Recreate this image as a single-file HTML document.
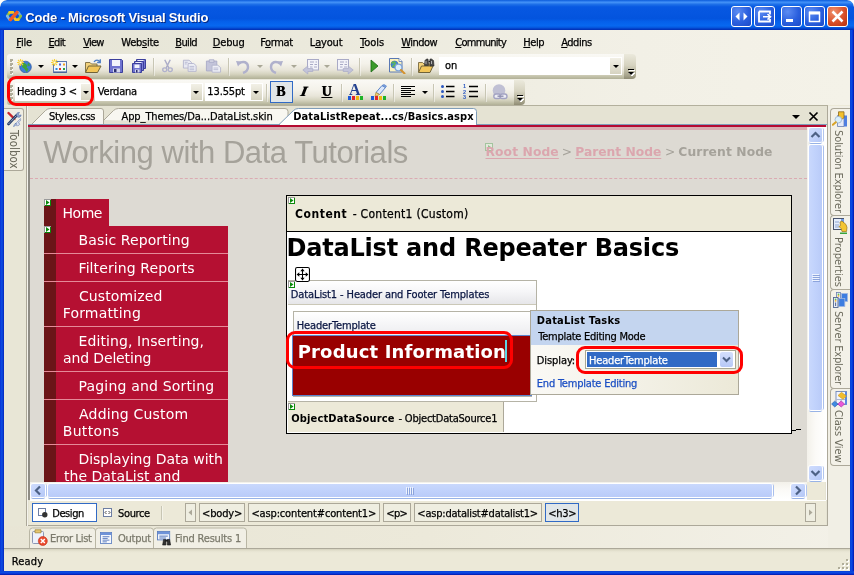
<!DOCTYPE html>
<html lang="en">
<head>
<meta charset="utf-8">
<title>Code - Microsoft Visual Studio</title>
<style>
*{box-sizing:border-box;margin:0;padding:0}
html,body{width:854px;height:575px;overflow:hidden;background:#fff}
body{font-family:"DejaVu Sans Condensed","Liberation Sans",sans-serif;font-size:11px;color:#000;line-height:1}
#win{will-change:transform;position:relative;width:854px;height:575px;overflow:hidden;background:#ece9d8;border-radius:7px 7px 0 0}
.a,#win div,#win span,#win svg{position:absolute;white-space:nowrap}
.ui{font-family:"DejaVu Sans Condensed","Liberation Sans",sans-serif;font-size:11px;line-height:13px;-webkit-text-stroke:.25px currentColor}
.vd{font-family:"DejaVu Sans","Liberation Sans",sans-serif}
#win u{position:static;text-decoration:underline;text-underline-offset:1px;text-decoration-thickness:1px}
#win b,#win i{position:static}
/* title bar */
#title{left:0;top:0;width:854px;height:30px;background:linear-gradient(180deg,#0a5ad8 0%,#2a7aee 4%,#4190f6 8%,#1c6ee8 15%,#0758e2 23%,#0354de 62%,#0560ea 72%,#0768f0 86%,#0556dd 92%,#0238c2 97%,#0130b0 100%);border-radius:7px 7px 0 0}
.t{font:bold 13px "Liberation Sans",sans-serif;color:#fff;text-shadow:1px 1px 0 #0a2a80;line-height:16px}
.cb{top:6px;width:21px;height:21px;border:1px solid #fff;border-radius:3px;background:radial-gradient(circle at 30% 25%,#5d8cf2 0%,#2a5fde 55%,#1c4ac8 100%)}
.cb.x{background:radial-gradient(circle at 30% 25%,#f0906c 0%,#d9502a 55%,#b8300c 100%)}
/* frame */
#bl{left:0;top:30px;width:4px;height:545px;background:linear-gradient(90deg,#0831d9,#0a4be0 40%,#0b3fd8 70%,#0024b8)}
#br{left:850px;top:30px;width:4px;height:545px;background:linear-gradient(90deg,#0a3fd8,#0a4be0 40%,#0831d9 70%,#001a9e)}
#bb{left:0;top:571px;width:854px;height:4px;background:linear-gradient(180deg,#0a3fd8,#0a4be0 40%,#0831d9 70%,#001a9e)}
/* menubar */
#menubar{left:4px;top:30px;width:846px;height:24px}

/* toolbars */
.tb{background:linear-gradient(180deg,#faf9f5 0%,#f4f2ea 38%,#e8e5d9 64%,#d6d4c0 80%,#c3c2aa 90%,#b1b097 100%);border-radius:3px 0 0 3px}
.tbend{background:linear-gradient(180deg,#ebe9dc 0%,#d6d3c0 45%,#a9a68e 85%,#8f8c74 100%);border-radius:0 4px 4px 0}
.grip{width:3px;background:linear-gradient(135deg,#b0ad99 0 60%,#fff 60%) 0 0/3px 4px repeat-y;}.grip::after{content:"";position:absolute;left:0;top:3px;width:3px;height:100%;background:repeating-linear-gradient(180deg,#f1efe6 0 1px,transparent 1px 4px)}
.sep{width:1px;background:#c8c6b4;box-shadow:1px 0 0 rgba(255,255,255,.45)}
.combo{background:#fff;height:18px}
.cbtn{width:13px;height:16px;background:linear-gradient(180deg,#f2f0e6,#d6d3c0)}
.arr{width:0;height:0;border:3px solid transparent;border-top:3px solid #000;border-bottom:0}
.red{border:3px solid #f00;border-radius:9px;z-index:5}
/* doc */
#doc{left:30px;top:130px;width:777px;height:352px;background:#dddad3;overflow:hidden}
#nav{left:14px;top:69px;width:184px;height:300px}
#nav .mi{left:0;width:184px;background:#b51032;border-left:12px solid #6b1518;color:#fff;font-size:14px;line-height:17px;white-space:nowrap;box-shadow:0 1px 0 #e58a98}
#nav .mi:first-child{box-shadow:none}
#nav .mi i{display:inline-block;width:16px}
#content{left:256px;top:65px;width:506px;height:239px;background:#fff;border:1px solid #000}
#dl{left:1px;top:84px;width:249px;height:122px;border:1px solid #b5b3a6;border-left:0;background:#fff}
#pop{left:243px;top:114px;width:209px;height:85px;border:1px solid #aca899;background:linear-gradient(90deg,#faf9f5,#ece9d8)}
.sbb{border-radius:2px;background:linear-gradient(135deg,#cfdcfd 0%,#c3d3fb 50%,#b3c7f6 100%);box-shadow:0 0 0 1px #fff,0 2px 0 0 #98b3e6,2px 0 0 0 #b2c5ee}
.sbt{border-radius:2px;box-shadow:0 0 0 1px #fff,0 2px 0 0 #98b3e6,2px 0 0 0 #a9bfec}
.crumb{top:503px;height:19px;border:1px solid #aca899;background:#efeee1}
.stab{left:830px;width:21px;border:1px solid #aca899;border-right:0;border-radius:4px 0 0 4px;background:#f3f1e8}
.sv{left:846px;transform-origin:0 0;transform:rotate(90deg);font-family:"DejaVu Sans Condensed","Liberation Sans",sans-serif;font-size:11px;line-height:15px;color:#6b6a5c;letter-spacing:0}
#crumbs{left:0;top:0}
.bc{font-family:"DejaVu Sans","Liberation Sans",sans-serif;font-size:12.300px;font-weight:bold;line-height:16px;color:#a5a29a}
.bc.l{color:#dba6ae;text-decoration:underline;text-underline-offset:2px}
.bc.s{font-weight:normal}
.nv{font-family:"DejaVu Sans","Liberation Sans",sans-serif;font-size:14px;line-height:17px;color:#fff}
</style>
</head>
<body>
<div id="win">
<!-- title -->
<div id="title">
 <svg style="left:5px;top:10px" width="18" height="12" viewBox="0 0 18 12"><path d="M2.200 6L4.600 2.400" stroke="#8cc03f" stroke-width="2.600" stroke-linecap="round"/><path d="M4.600 2.400H8" stroke="#f7c51f" stroke-width="2.600" stroke-linecap="round"/><path d="M2.200 6l2.400 3.600" stroke="#7fb4e8" stroke-width="2.600" stroke-linecap="round"/><path d="M15.800 6l-2.400-3.600" stroke="#69a8e0" stroke-width="2.600" stroke-linecap="round"/><path d="M15.800 6l-2.400 3.600" stroke="#8cc03f" stroke-width="2.600" stroke-linecap="round"/><path d="M13.400 9.600H10.500L8.500 6.500" fill="none" stroke="#f7c51f" stroke-width="2.600" stroke-linecap="round"/><path d="M5.500 9.600L12 2.400" stroke="#f05a28" stroke-width="3.400" stroke-linecap="round"/></svg>
 <span class="t" style="left:25.3px;top:10px;letter-spacing:-0.18px;">Code - Microsoft Visual Studio</span>
 <div class="cb" style="left:731px"><svg width="19" height="19" viewBox="0 0 19 19"><path d="M3.500 9.500l4-4v8zM15.500 9.500l-4-4v8z" fill="#fff"/></svg></div>
 <div class="cb" style="left:754px"><svg width="19" height="19" viewBox="0 0 19 19"><path d="M4 4.500h11v3M15 12v2.500H4V4.500" fill="none" stroke="#fff" stroke-width="1.800"/><path d="M8 9.800h6.500M12.500 7l3 2.800-3 2.800" fill="none" stroke="#fff" stroke-width="1.600"/></svg></div>
 <div class="cb" style="left:781px"><svg width="19" height="19" viewBox="0 0 19 19"><rect x="4" y="12" width="7" height="3" fill="#fff"/></svg></div>
 <div class="cb" style="left:804px"><svg width="19" height="19" viewBox="0 0 19 19"><path d="M4.500 5.500h10v9h-10z" fill="none" stroke="#fff" stroke-width="1.500"/><path d="M4 4.500h11v3H4z" fill="#fff"/></svg></div>
 <div class="cb x" style="left:827px"><svg width="19" height="19" viewBox="0 0 19 19"><path d="M4.500 4.500l10 10M14.500 4.500l-10 10" stroke="#fff" stroke-width="2.500" stroke-linecap="butt"/></svg></div>
</div>
<!-- menu -->
<div style="left:4px;top:30px;width:846px;height:76px;background:linear-gradient(90deg,#e5e4d5 0%,#ebe9dc 35%,#f2f0e6 75%,#f4f2e8 100%)"></div>
<div id="menubar"></div>

<span class="ui" style="left:16.3px;top:36px;letter-spacing:-0.23px;"><u>F</u>ile</span>
<span class="ui" style="left:48.5px;top:36px;letter-spacing:-0.7px;"><u>E</u>dit</span>
<span class="ui" style="left:83.2px;top:36px;letter-spacing:-0.77px;"><u>V</u>iew</span>
<span class="ui" style="left:121.3px;top:36px;letter-spacing:-0.25px;">Web<u>s</u>ite</span>
<span class="ui" style="left:175.3px;top:36px;letter-spacing:-0.65px;"><u>B</u>uild</span>
<span class="ui" style="left:212.8px;top:36px;letter-spacing:-0.15px;"><u>D</u>ebug</span>
<span class="ui" style="left:260.2px;top:36px;letter-spacing:-0.38px;">F<u>o</u>rmat</span>
<span class="ui" style="left:309.8px;top:36px;letter-spacing:-0.18px;">L<u>a</u>yout</span>
<span class="ui" style="left:360px;top:36px;letter-spacing:-0.02px;"><u>T</u>ools</span>
<span class="ui" style="left:401.3px;top:36px;letter-spacing:-0.54px;"><u>W</u>indow</span>
<span class="ui" style="left:455.2px;top:36px;letter-spacing:-0.7px;"><u>C</u>ommunity</span>
<span class="ui" style="left:523.3px;top:36px;letter-spacing:-0.43px;"><u>H</u>elp</span>
<span class="ui" style="left:561.2px;top:36px;letter-spacing:-0.48px;"><u>A</u>ddins</span>
<!-- toolbars -->
<div class="tb" style="left:7px;top:54px;width:618px;height:25px"></div>
<div class="tbend" style="left:624px;top:54px;width:12px;height:25px"><svg width="12" height="25"><path d="M5 16.500h6M5 19h6l-3 3z" stroke="#fff" fill="#fff" stroke-width="1"/><path d="M4 15.500h6" stroke="#000" stroke-width="1"/><path d="M4 18h6l-3 3z" fill="#000"/></svg></div>
<div class="grip" style="left:10px;top:59px;height:15px"></div>
<!-- new web site -->
<svg style="left:17px;top:59px" width="15" height="14" viewBox="0 0 15 14"><circle cx="8.500" cy="8" r="5.800" fill="#3d7fd6" stroke="#2a4f9a" stroke-width=".7"/><path d="M5 4.500c1.500-1 3 0 4 .5l1.500 2-1 1.500 2 1.500-1.500 3c-1.500-.5-1.500-2-2.500-3s-2.500-1.500-2.500-3z" fill="#3fa33c"/><path d="M11 3.500l2 2.500-1 1.500-1.500-1.500z" fill="#3fa33c"/><path d="M3.500 0v7M0 3.500h7M1 1l5 5M6 1l-5 5" stroke="#f6cf3a" stroke-width="1.100"/><rect x="2.500" y="2.500" width="2" height="2" fill="#fffbe0"/></svg>
<div class="arr" style="left:38px;top:65px"></div>
<!-- add item -->
<svg style="left:51px;top:59px" width="16" height="14" viewBox="0 0 16 14"><rect x="2.500" y="2.500" width="13" height="11" fill="#f4f7fd" stroke="#5d79b0"/><path d="M3 13h12.500" stroke="#36508a" stroke-width="1"/><rect x="8" y="4.500" width="2" height="2" fill="#4a63d8"/><rect x="12" y="4.500" width="2" height="2" fill="#f0a020"/><rect x="4.500" y="9" width="2" height="2" fill="#2a8ae0"/><rect x="8" y="9" width="2" height="2" fill="#e04020"/><rect x="12" y="9" width="2" height="2" fill="#2aa040"/><path d="M3.500 0v7M0 3.500h7M1 1l5 5M6 1l-5 5" stroke="#f6cf3a" stroke-width="1.100"/><rect x="2.500" y="2.500" width="2" height="2" fill="#fffbe0"/></svg>
<div class="arr" style="left:72px;top:65px"></div>
<!-- open -->
<svg style="left:85px;top:59px" width="17" height="14" viewBox="0 0 17 14"><path d="M.5 13V3.500h4.500l1.500 1.500h5.500V7" fill="#f3d27c" stroke="#85754a"/><path d="M.5 13.500L3.500 7h12.500l-3.500 6.500z" fill="#f2c65a" stroke="#6f6238"/><path d="M9 3c1.500-2.500 4.500-2.500 6 0M15.300 .3v3.200h-3.200" fill="none" stroke="#4f7fc6" stroke-width="1.300"/></svg>
<!-- save -->
<svg style="left:109px;top:59px" width="14" height="14" viewBox="0 0 14 14"><path d="M.5 .5h12l1 1v12H.5z" fill="#7074d0" stroke="#3b3f9c"/><rect x="3" y="1" width="8" height="6" fill="#f2f4fc"/><rect x="4" y="9.500" width="7" height="4" fill="#d5d8ee"/><rect x="5" y="10" width="2.500" height="3" fill="#2c2f6e"/></svg>
<!-- save all -->
<svg style="left:132px;top:59px" width="14" height="14" viewBox="0 0 14 14"><path d="M4.500 .5h9v9h-9z" fill="#7377d2" stroke="#3b3f9c"/><path d="M5.500 1.500h6" stroke="#eef0fb" stroke-width="1"/><path d="M2.500 2.500h9v9h-9z" fill="#7b7fd8" stroke="#3b3f9c"/><path d="M3.500 3.500h6" stroke="#eef0fb" stroke-width="1"/><path d="M.5 4.500h9v9h-9z" fill="#7074d0" stroke="#3b3f9c"/><rect x="2.500" y="5.500" width="5" height="3.500" fill="#f2f4fc"/><rect x="3" y="10.500" width="4.500" height="3" fill="#d5d8ee"/><rect x="4" y="11" width="1.500" height="2.500" fill="#2c2f6e"/></svg>
<div class="sep" style="left:153px;top:58px;height:18px"></div>
<!-- cut (disabled) -->
<svg style="left:162px;top:59px" width="11" height="14" preserveAspectRatio="none" viewBox="0 0 12 17"><path d="M3 1l4.500 10M9 1L4.500 11" stroke="#acadc8" stroke-width="1.600" fill="none"/><circle cx="3" cy="13" r="2.200" fill="none" stroke="#b0b1cc" stroke-width="1.500"/><circle cx="9" cy="13" r="2.200" fill="none" stroke="#b0b1cc" stroke-width="1.500"/></svg>
<!-- copy -->
<svg style="left:182px;top:59px" width="16" height="14" preserveAspectRatio="none" viewBox="0 0 17 17"><path d="M1.500 1.500h6l2.500 2.500v7h-8.500z" fill="#e8e9f2" stroke="#b3b4cd"/><path d="M6.500 5.500h6l2.500 2.500v7h-8.500z" fill="#eeeff6" stroke="#b3b4cd"/><path d="M8 9h5M8 11h5M8 13h5M3 4h3M3 6h2" stroke="#b4b6d0" stroke-width="1"/></svg>
<!-- paste -->
<svg style="left:205px;top:59px" width="17" height="14" preserveAspectRatio="none" viewBox="0 0 18 17"><path d="M1.500 2.500h11v12h-11z" fill="#c3c4da" stroke="#a9aac6"/><path d="M4.500 1h5v3h-5z" fill="#dadbe8" stroke="#a9aac6"/><path d="M7.500 7.500h6l3 3v5.500h-9z" fill="#eeeff6" stroke="#b3b4cd"/><path d="M9 11h5M9 13h5" stroke="#b4b6d0"/></svg>
<div class="sep" style="left:228px;top:58px;height:18px"></div>
<!-- undo -->
<svg style="left:236px;top:59px" width="14" height="15" viewBox="0 0 14 15"><path d="M3 4.500c4-3 9-1.500 9 3.500 0 3-2 5-5 6" fill="none" stroke="#b0b1cc" stroke-width="2.400"/><path d="M0 2l6 .5-4 5z" fill="#b0b1cc"/></svg>
<div class="arr" style="left:257px;top:65px;border-top-color:#aaa897"></div>
<!-- redo -->
<svg style="left:269px;top:59px" width="14" height="15" viewBox="0 0 14 15"><path d="M11 4.500c-4-3-9-1.500-9 3.500 0 3 2 5 5 6" fill="none" stroke="#b0b1cc" stroke-width="2.400"/><path d="M14 2l-6 .5 4 5z" fill="#b0b1cc"/></svg>
<div class="arr" style="left:291px;top:65px;border-top-color:#aaa897"></div>
<!-- nav back -->
<svg style="left:302px;top:59px" width="18" height="16" viewBox="0 0 18 16"><rect x="5.500" y=".5" width="11" height="10.500" fill="#f3f3f9" stroke="#a9aac6"/><path d="M8 3h4M13.500 3h1.500M8 5.500h3M12.500 5.500h2.500M8 8h2.500M12 8h3" stroke="#a9aac6" stroke-width="1.200"/><path d="M.8 11l5-4v2.500h5v3h-5V15z" fill="#c3c4da" stroke="#a9aac6" stroke-width=".7"/></svg>
<div class="arr" style="left:324px;top:65px;border-top-color:#aaa897"></div>
<!-- nav fwd -->
<svg style="left:336px;top:59px" width="18" height="16" viewBox="0 0 18 16"><rect x="1.500" y=".5" width="11" height="10.500" fill="#f3f3f9" stroke="#a9aac6"/><path d="M4 3h4M9.500 3h1.500M4 5.500h3M8.500 5.500h2.500M4 8h2.500M8 8h3" stroke="#a9aac6" stroke-width="1.200"/><path d="M17.200 11l-5-4v2.500h-5v3h5V15z" fill="#c3c4da" stroke="#a9aac6" stroke-width=".7"/></svg>
<div class="sep" style="left:359px;top:58px;height:18px"></div>
<!-- start -->
<svg style="left:370px;top:59px" width="9" height="14" viewBox="0 0 9 14"><path d="M1 1l7 6-7 6z" fill="#3a9a2a" stroke="#1d6a14" stroke-width=".8"/></svg>
<!-- browser -->
<svg style="left:389px;top:58px" width="17" height="16" viewBox="0 0 17 16"><path d="M.5 .5h9.500l3 3v10.500H.5z" fill="#fdf3c0" stroke="#5a78b4"/><path d="M10 .5v3h3" fill="#fff" stroke="#5a78b4" stroke-width=".8"/><circle cx="5.500" cy="6.500" r="3.600" fill="#3f86d6" stroke="#2b5c9c" stroke-width=".5"/><path d="M3 5.500c1-2 3.500-1.500 3 .5-.5 1.500-2 1-2 3" fill="none" stroke="#62b84e" stroke-width="1.700"/><circle cx="9.500" cy="9.500" r="3.400" fill="#dbeefb" stroke="#7fa3d6" stroke-width="1.200"/><path d="M12 12l3.500 3.500" stroke="#d3922e" stroke-width="2" stroke-linecap="round"/></svg>
<div class="sep" style="left:411px;top:58px;height:18px"></div>
<!-- find in files -->
<svg style="left:418px;top:58px" width="17" height="16" viewBox="0 0 17 16"><path d="M.5 14V4.500h4l1.500 1.500h6V8" fill="#f3d27c" stroke="#85754a"/><path d="M.5 14.500L3.500 8h11.500l-3 6.500z" fill="#f2c65a" stroke="#6f6238"/><path d="M7 2.500l1.500-1.500h1.500l.5 6.500h-4zM12 1h1.500l2 1.500.5 5.500h-4z" fill="#4a4a4a" stroke="#222" stroke-width=".6"/><path d="M8 3v3M13.500 3v3" stroke="#bdbdbd" stroke-width=".9"/><path d="M10.500 3.500h1.500" stroke="#222" stroke-width="1.500"/></svg>
<div class="combo" style="left:439px;top:57px;width:183px;height:18px"><div class="cbtn" style="left:171px;top:1px;width:11px;height:16px"></div><div class="arr" style="left:174px;top:8px"></div><span class="ui" style="left:6.1px;top:2px;letter-spacing:-0.2px;">on</span></div>

<div class="tb" style="left:7px;top:80px;width:508px;height:25px"></div>
<div class="tbend" style="left:514px;top:80px;width:11px;height:25px"><svg width="12" height="25"><path d="M4 16.500h6M4 19h6l-3 3z" stroke="#fff" fill="#fff" stroke-width="1"/><path d="M3 15.500h6" stroke="#000" stroke-width="1"/><path d="M3 18h6l-3 3z" fill="#000"/></svg></div>
<div class="grip" style="left:10px;top:85px;height:15px"></div>
<div class="combo" style="left:15px;top:83px;width:78px"><div class="cbtn" style="left:66px;top:1px;width:11px"></div><div class="arr" style="left:68px;top:8px"></div><span class="ui" style="left:1.9px;top:2px;letter-spacing:-0.19px;">Heading 3 &lt;</span></div>
<div class="combo" style="left:95px;top:83px;width:108px"><div class="cbtn" style="left:96px;top:1px;width:11px"></div><div class="arr" style="left:98px;top:8px"></div><span class="ui" style="left:2.8px;top:2px;letter-spacing:-0.2px;">Verdana</span></div>
<div class="combo" style="left:205px;top:83px;width:58px"><div class="cbtn" style="left:46px;top:1px;width:11px"></div><div class="arr" style="left:48px;top:8px"></div><span class="ui" style="left:2.3px;top:2px;letter-spacing:-0.13px;">13.55pt</span></div>
<div class="sep" style="left:266px;top:84px;height:18px"></div>
<div style="left:270px;top:81px;width:23px;height:22px;border:1px solid #316ac5;background:#e1e6e8"><span style="left:5px;top:1.500px;font:bold 14px 'Liberation Serif',serif;line-height:16px;text-shadow:.6px 0 0 #000">B</span></div>
<span style="left:298.500px;top:83.500px;font:italic bold 14px 'Liberation Serif',serif;line-height:16px;text-shadow:.6px 0 0 #000;transform:skewX(-10deg) scaleX(1.15);transform-origin:0 100%">I</span>
<span style="left:321.500px;top:83.500px;font:bold 14px 'Liberation Serif',serif;line-height:16px;text-decoration:underline;text-underline-offset:1px;text-shadow:.6px 0 0 #000">U</span>
<div class="sep" style="left:341px;top:84px;height:18px"></div>
<!-- font color -->
<span style="left:349px;top:81px;font:bold 16px 'Liberation Serif',serif;line-height:18px;color:#23418f">A</span>
<svg style="left:348px;top:96px" width="16" height="4"><rect x="0" width="3" height="4" fill="#1f5ad6"/><rect x="4" width="3" height="4" fill="#e0262a"/><rect x="8" width="3" height="4" fill="#f1b80c"/><rect x="12" width="3" height="4" fill="#1fb227"/></svg>
<!-- highlight -->
<svg style="left:371.500px;top:84px" width="16" height="13" viewBox="0 0 16 13"><path d="M10 1.500l3.500 2-6 7-3.500-2z" fill="#dbe7fa" stroke="#5c84c8"/><path d="M4 8.500l3.500 2-4.500 2z" fill="#f3d27a" stroke="#b28a2a" stroke-width=".7"/><path d="M10 1.500l2-1 2.500 1.500-1 1.500z" fill="#7ea3de" stroke="#5c84c8" stroke-width=".7"/></svg>
<svg style="left:371px;top:96px" width="16" height="4"><rect x="0" width="3" height="4" fill="#1f5ad6"/><rect x="4" width="3" height="4" fill="#e0262a"/><rect x="8" width="3" height="4" fill="#f1b80c"/><rect x="12" width="3" height="4" fill="#1fb227"/></svg>
<div class="sep" style="left:393px;top:84px;height:18px"></div>
<!-- align -->
<svg style="left:401px;top:86px" width="15" height="12"><path d="M0 .5h14M0 2.500h10M0 4.500h14M0 6.500h10M0 8.500h14M0 10.500h10" stroke="#000" stroke-width="1.100"/></svg>
<div class="arr" style="left:422px;top:91px"></div>
<div class="sep" style="left:433px;top:84px;height:18px"></div>
<!-- bullets -->
<svg style="left:441px;top:84px" width="15" height="14"><path d="M5 2.500h8.500M5 7.500h8.500M5 12.500h8.500" stroke="#000" stroke-width="1.300"/><circle cx="1.500" cy="2.500" r="1.500" fill="#2a57c0"/><circle cx="1.500" cy="7.500" r="1.500" fill="#2a57c0"/><circle cx="1.500" cy="12.500" r="1.500" fill="#2a57c0"/></svg>
<!-- numbered -->
<svg style="left:463px;top:83px" width="16" height="16"><path d="M6 3.500h9M6 8.500h9M6 13.500h9" stroke="#000" stroke-width="1.300"/><text x="0" y="5" font-family="Liberation Sans" font-size="5.500" font-weight="bold" fill="#2a57c0">1</text><text x="0" y="10.500" font-family="Liberation Sans" font-size="5.500" font-weight="bold" fill="#2a57c0">2</text><text x="0" y="16" font-family="Liberation Sans" font-size="5.500" font-weight="bold" fill="#2a57c0">3</text></svg>
<div class="sep" style="left:485px;top:84px;height:18px"></div>
<!-- hyperlink disabled -->
<svg style="left:491px;top:82px" width="18" height="18" viewBox="0 0 18 18"><circle cx="8" cy="8.500" r="6.300" fill="#c0c0d4"/><rect x="2.800" y="12" width="7" height="4.500" rx="2.200" fill="#eeeef5" stroke="#a3a3c2" stroke-width="1.400"/><rect x="9" y="12" width="7" height="4.500" rx="2.200" fill="#eeeef5" stroke="#a3a3c2" stroke-width="1.400"/><path d="M6.500 14.200h6" stroke="#8f8fb0" stroke-width="1.400"/></svg>
<div class="red" style="left:7px;top:76px;width:87px;height:30px"></div>
<!-- tabs -->
<div style="left:4px;top:105px;width:846px;height:1px;background:#ece9d8"></div>
<div style="left:26px;top:105px;width:802px;height:1px;background:#b3b09d"></div>
<div style="left:4px;top:106px;width:846px;height:465px;background:#ece9d8"></div>
<!-- toolbox strip -->
<div style="left:4px;top:106px;width:22px;height:420px;background:#e8e6d6"></div>
<div style="left:4px;top:108px;width:20px;height:63px;border:1px solid #aca899;border-left:0;border-radius:0 3px 3px 0;background:#f0eee3"></div>
<svg style="left:6.500px;top:110.500px" width="16" height="18" viewBox="0 0 16 18"><path d="M1.500 2l5.500 5.500" stroke="#c8272c" stroke-width="2.400" stroke-linecap="round"/><path d="M7 7.500l1.500 1.500" stroke="#f08a7a" stroke-width="1.600"/><path d="M1.500 13l8-8.500" stroke="#243a66" stroke-width="2.600" stroke-linecap="round"/><path d="M1.800 12.700l7.500-8" stroke="#e8eefb" stroke-width="1" stroke-dasharray="1 .8"/><path d="M9.500 4.500c-.5-2 1-3.500 3-3l-1.200 1.600 1 1.300 1.800-.5c0 2-2 3-3.800 2z" fill="#8ea4cf" stroke="#5670a6" stroke-width=".6"/><path d="M13.500 7.500c.5 2-.5 3.500-2.500 4l2 1.500c-1 2-3 2-4 1.500l.5-3z" fill="#d5dcee" stroke="#8797bd" stroke-width=".7"/><path d="M9 12.500l-2.500 3" stroke="#4d6fb5" stroke-width="1.800" stroke-dasharray="1 .6"/></svg>
<span class="sv" style="left:20.500px;top:130px;font-size:11.500px">Toolbox</span>
<!-- doc well -->
<div style="left:28px;top:106px;width:800px;height:420px;background:#e5e3d3"></div>
<div style="left:26px;top:106px;width:1px;height:420px;background:#aca899"></div>
<div style="left:27px;top:106px;width:1px;height:420px;background:#f4f3ec"></div>
<div style="left:827px;top:106px;width:1px;height:420px;background:#aca899"></div>
<!-- tabs -->
<svg style="left:28px;top:106px" width="460" height="19" viewBox="0 0 460 19">
 <path d="M3.500 18.500l14-14q2-2 5-2h50.500q2.500 0 2.500 2.500v13.500" fill="#f8f7f1" stroke="#aca899"/>
 <path d="M76 14l9.500-9.500q2-2 5-2h166.500q3 0 3 3v13" fill="#f8f7f1" stroke="#aca899"/>
 <path d="M250.500 19l15-14.500q2-2 5-2h175q3 0 3 3v13.500" fill="#fff" stroke="#7f9db9"/>
</svg>

<span class="ui" style="left:48.9px;top:110px;letter-spacing:-0.26px;">Styles.css</span>
<span class="ui" style="left:121.5px;top:110px;letter-spacing:-0.1px;">App_Themes/Da...DataList.skin</span>
<span class="ui" style="left:293.3px;top:110px;letter-spacing:0.08px;font-weight:bold;-webkit-text-stroke:0">DataListRepeat...cs/Basics.aspx</span>
<div class="arr" style="left:792px;top:115px;border-width:4px 4px 0 4px"></div>
<svg style="left:808px;top:110.500px" width="11" height="11"><path d="M1.500 1.500l8 8M9.500 1.500l-8 8" stroke="#000" stroke-width="1.700"/></svg>
<div style="left:28px;top:124px;width:799px;height:1px;background:#7f9db9"></div>
<div style="left:280px;top:124px;width:196px;height:1px;background:#fff"></div>
<div style="left:28px;top:125px;width:798px;height:2px;background:#b50a32"></div>
<div style="left:28px;top:127px;width:2px;height:373px;background:#8e8c84"></div>
<div style="left:826px;top:127px;width:1px;height:373px;background:#fff"></div>
<div style="left:30px;top:127px;width:794px;height:3px;background:#d8adb1"></div>
<!-- doc -->
<div id="doc">
 
 <span style="left:13.3px;top:6px;letter-spacing:-0.45px;font:31px 'Liberation Sans',sans-serif;line-height:34px;color:#a5a29a">Working with Data Tutorials</span>
 <div style="left:0;top:48px;width:777px;height:0;border-top:1px dashed #dbaab2"></div>
 <svg style="left:455px;top:13px" width="8" height="8"><rect x=".5" y=".5" width="7" height="7" fill="#e4e9dc" stroke="#a3c49e"/><path d="M3 2l3 2-3 2z" fill="#93c18e"/></svg>
 <div id="crumbs" class="vd">
 <span class="bc l" style="left:455.5px;top:13.7px;letter-spacing:0.1px;">Root Node</span>
 <span class="bc s" style="left:531.7px;top:13.7px;letter-spacing:-1.1px;">&gt;</span>
 <span class="bc l" style="left:545.3px;top:13.7px;letter-spacing:-0.02px;">Parent Node</span>
 <span class="bc s" style="left:634.9px;top:13.7px;letter-spacing:-1.8px;">&gt;</span>
 <span class="bc" style="left:648.3px;top:13.7px;letter-spacing:0.1px;">Current Node</span>
 </div>
 <!-- left menu -->
 <div id="nav" class="vd">
  
  <div class="mi" style="top:0;height:27px;width:65px"><span class="nv" style="left:6.5px;top:6px;letter-spacing:-0.47px;">Home</span></div>
  
  <div class="mi" style="top:27px;height:27px"><span class="nv" style="left:22.6px;top:6px;letter-spacing:0.11px;">Basic Reporting</span></div>
  
  <div class="mi" style="top:55px;height:27px"><span class="nv" style="left:22.5px;top:6px;letter-spacing:0.1px;">Filtering Reports</span></div>
  
  <div class="mi" style="top:83px;height:44px"><span class="nv" style="left:22.9px;top:6px;letter-spacing:0.12px;">Customized</span><span class="nv" style="left:6.7px;top:23px;letter-spacing:0.18px;">Formatting</span></div>
  
  <div class="mi" style="top:128px;height:44px"><span class="nv" style="left:22.5px;top:6px;letter-spacing:0.09px;">Editing, Inserting,</span><span class="nv" style="left:7.1px;top:23px;letter-spacing:-0.15px;">and Deleting</span></div>
  
  <div class="mi" style="top:173px;height:27px"><span class="nv" style="left:22.5px;top:6px;letter-spacing:0.18px;">Paging and Sorting</span></div>
  
  <div class="mi" style="top:201px;height:44px"><span class="nv" style="left:23.1px;top:6px;letter-spacing:0.18px;">Adding Custom</span><span class="nv" style="left:6.7px;top:23px;letter-spacing:0.35px;">Buttons</span></div>
  
  <div class="mi" style="top:246px;height:60px"><span class="nv" style="left:22.5px;top:6px;letter-spacing:-0.05px;">Displaying Data with</span><span class="nv" style="left:8.1px;top:23px;letter-spacing:0.01px;">the DataList and</span></div>
 </div>
 <svg style="left:14px;top:69px" width="7" height="7"><rect width="7" height="7" fill="#0a8a0a"/><path d="M0 7V0h7" fill="none" stroke="#9a9a9a" stroke-width="2"/><rect x="1" y="1" width="5" height="5" fill="#fff"/><path d="M2 1l3.500 2.500-3.500 2.500z" fill="#0a8a0a"/></svg>
 <svg style="left:14px;top:96px" width="7" height="7"><rect width="7" height="7" fill="#0a8a0a"/><path d="M0 7V0h7" fill="none" stroke="#9a9a9a" stroke-width="2"/><rect x="1" y="1" width="5" height="5" fill="#fff"/><path d="M2 1l3.500 2.500-3.500 2.500z" fill="#0a8a0a"/></svg>
 <div style="left:762px;top:300px;width:4px;height:1px;background:#000"></div><div style="left:766px;top:299px;width:5px;height:1px;background:#000"></div>
 <!-- content -->
 <div id="content">
  
  <div style="left:0;top:0;width:504px;height:36px;background:#ece9d8;border-bottom:1px solid #000"></div>
  <span class="ui" style="left:8px;top:11px;letter-spacing:0.57px;font-size:12px;line-height:14px;font-weight:bold;-webkit-text-stroke:0">Content</span>
  <span class="ui" style="left:65.7px;top:11px;letter-spacing:0.29px;font-size:12px;line-height:14px">- Content1 (Custom)</span>
  <span class="vd" style="left:-0.5px;top:38px;letter-spacing:-0.2px;font-weight:bold;font-size:24px;line-height:28px">DataList and Repeater Basics</span>
  <svg style="left:8px;top:71px;z-index:2" width="15" height="15" viewBox="0 0 14 14"><rect x=".5" y=".5" width="13" height="13" rx="1.500" fill="#fff" stroke="#000"/><path d="M7 2.500v9M2.500 7h9" stroke="#000" stroke-width="1"/><path d="M7 1.500l2 2.500h-4zM7 12.500l2-2.500h-4zM1.500 7l2.500-2v4zM12.500 7l-2.500-2v4z" fill="#000"/></svg>
  <div id="dl">
   
   <div style="left:0;top:0;width:248px;height:24px;background:linear-gradient(180deg,#fff 0%,#f6f6f8 45%,#e6e6e9 100%);border-bottom:1px solid #cbc8b8"></div>
   <span class="ui" style="left:2.8px;top:7px;letter-spacing:-0.11px;color:#0a1642">DataList1 - Header and Footer Templates</span>
   <div style="left:5px;top:30px;width:239px;height:86px;border:1px solid #b5b3a6;background:linear-gradient(180deg,#fff 0,#ececef 24px)"></div>
   <span class="ui" style="left:8.8px;top:38px;letter-spacing:-0.15px;color:#0a1642">HeaderTemplate</span>
   <div style="left:4px;top:54px;width:240px;height:61px;border:1px solid #5b84cc;background:#900"></div>
   <span class="vd" style="left:9.7px;top:60px;letter-spacing:0.17px;font-size:18px;font-weight:bold;color:#fff;line-height:22px">Product Information</span>
   <div style="left:217px;top:59px;width:2px;height:22px;background:#5fd6e6"></div>
  </div>
  <svg style="left:1px;top:1px" width="7" height="7"><rect width="7" height="7" fill="#0a8a0a"/><path d="M0 7V0h7" fill="none" stroke="#9a9a9a" stroke-width="2"/><rect x="1" y="1" width="5" height="5" fill="#fff"/><path d="M2 1l3.500 2.500-3.500 2.500z" fill="#0a8a0a"/></svg>
  <svg style="left:1px;top:85px" width="7" height="7"><rect width="7" height="7" fill="#0a8a0a"/><path d="M0 7V0h7" fill="none" stroke="#9a9a9a" stroke-width="2"/><rect x="1" y="1" width="5" height="5" fill="#fff"/><path d="M2 1l3.500 2.500-3.500 2.500z" fill="#0a8a0a"/></svg>
  
  <div style="left:1px;top:206px;width:216px;height:30px;background:#ece9d8;border-right:1px solid #aca899"></div>
  <svg style="left:1px;top:207px" width="7" height="7"><rect width="7" height="7" fill="#0a8a0a"/><path d="M0 7V0h7" fill="none" stroke="#9a9a9a" stroke-width="2"/><rect x="1" y="1" width="5" height="5" fill="#fff"/><path d="M2 1l3.500 2.500-3.500 2.500z" fill="#0a8a0a"/></svg>
  <span class="ui" style="left:4.2px;top:216px;letter-spacing:0.16px;font-weight:bold;-webkit-text-stroke:0">ObjectDataSource</span>
  <span class="ui" style="left:111.6px;top:216px;letter-spacing:-0.22px;">- ObjectDataSource1</span>
  <div class="red" style="left:-1px;top:135px;width:227px;height:38px"></div>
  <!-- tasks popup -->
  <div id="pop">
   
   <div style="left:0;top:0;width:207px;height:34px;background:#c4d5ef"></div>
   <span class="ui" style="left:5.8px;top:3px;letter-spacing:0.22px;font-weight:bold;-webkit-text-stroke:0">DataList Tasks</span>
   <span class="ui" style="left:7.3px;top:19px;letter-spacing:-0.27px;">Template Editing Mode</span>
   <span class="ui" style="left:5.8px;top:42.5px;letter-spacing:-0.09px;">Display:</span>
   <div style="left:54px;top:39px;width:151px;height:19px;border:1px solid #a9a792;background:#fff"></div>
   <div style="left:56px;top:41px;width:130px;height:15px;background:#316ac5"></div>
   <span class="ui" style="left:57.9px;top:42.5px;letter-spacing:-0.15px;color:#fff">HeaderTemplate</span>
   <div style="left:189px;top:41px;width:13px;height:15px;background:linear-gradient(180deg,#d3defc,#b7c8f6);border-radius:2px"><svg width="13" height="15"><path d="M3 5.500l3.500 3.500 3.500-3.500" fill="none" stroke="#4d6185" stroke-width="2"/></svg></div>
   <span class="ui" style="left:5.8px;top:65.5px;letter-spacing:-0.21px;color:#1b4fc4">End Template Editing</span>
  </div>
  <div class="red" style="left:288.500px;top:149.500px;width:167px;height:28px"></div>
 </div>
</div>
<!-- scroll -->
<!-- vertical scrollbar -->
<div style="left:807px;top:127px;width:19px;height:355px;background:linear-gradient(90deg,#f3f1ea 0%,#fbfaf7 45%,#fff 100%)"></div>
<div class="sbb" style="left:809px;top:128px;width:13px;height:14px"><svg width="13" height="14"><path d="M2.500 9l4-4 4 4" fill="none" stroke="#4d6185" stroke-width="2.200"/></svg></div>
<div class="sbt" style="left:809px;top:145px;width:13px;height:265px;background:linear-gradient(90deg,#c9d8fc 0%,#c2d3fc 40%,#b9cbf8 100%)"><svg style="left:3px;top:129px" width="8" height="9"><path d="M0 .5h7M0 2.500h7M0 4.500h7M0 6.500h7" stroke="#eef3fe"/><path d="M1 1.500h7M1 3.500h7M1 5.500h7M1 7.500h7" stroke="#8ca4dc"/></svg></div>
<div class="sbb" style="left:809px;top:466px;width:13px;height:14px"><svg width="13" height="14"><path d="M2.500 5l4 4 4-4" fill="none" stroke="#4d6185" stroke-width="2.200"/></svg></div>
<!-- horizontal scrollbar -->
<div style="left:30px;top:482px;width:777px;height:18px;background:linear-gradient(180deg,#f3f1ea 0%,#fbfaf7 45%,#fff 100%)"></div>
<div class="sbb" style="left:31px;top:484px;width:14px;height:13px"><svg width="14" height="13"><path d="M9 2.500l-4 4 4 4" fill="none" stroke="#4d6185" stroke-width="2.200"/></svg></div>
<div class="sbt" style="left:48px;top:484px;width:724px;height:13px;background:linear-gradient(180deg,#c9d8fc 0%,#c2d3fc 40%,#b9cbf8 100%)"><svg style="left:358px;top:3px" width="9" height="8"><path d="M.5 0v7M2.500 0v7M4.500 0v7M6.500 0v7" stroke="#eef3fe"/><path d="M1.500 1v7M3.500 1v7M5.500 1v7M7.500 1v7" stroke="#8ca4dc"/></svg></div>
<div class="sbb" style="left:791px;top:484px;width:14px;height:13px"><svg width="14" height="13"><path d="M5 2.500l4 4-4 4" fill="none" stroke="#4d6185" stroke-width="2.200"/></svg></div>
<div style="left:807px;top:482px;width:18px;height:18px;background:#ece9d8"></div>
<div style="left:30px;top:500px;width:796px;height:1px;background:#fff"></div>
<!-- viewbar -->
<div style="left:29px;top:501px;width:797px;height:24px;background:#ece9d8"></div>
<div style="left:28px;top:525px;width:799px;height:1px;background:#aca899"></div>
<div style="left:32px;top:503px;width:65px;height:19px;border:1px solid #316ac5;background:#fff"></div>
<svg style="left:38px;top:508px" width="10" height="10"><rect x=".5" y=".5" width="7" height="7" fill="#fff" stroke="#6d7ea3"/><circle cx="6.800" cy="6.800" r="2.700" fill="#333"/></svg>

<span class="ui" style="left:52.2px;top:507px;letter-spacing:-0.42px;">Design</span>
<svg style="left:103px;top:508px" width="9" height="9"><rect x=".5" y=".5" width="8" height="8" fill="#fff" stroke="#6d7ea3"/><path d="M3.500 3l-1.500 1.500 1.500 1.500M5.500 3l1.500 1.500-1.500 1.500" fill="none" stroke="#333" stroke-width=".9"/></svg>
<span class="ui" style="left:118.1px;top:507px;letter-spacing:-0.4px;">Source</span>
<div class="sep" style="left:161px;top:506px;height:14px"></div>
<div class="crumb" style="left:185px;width:11px"><svg width="9" height="17"><path d="M6 5.500v6l-3.500-3z" fill="#aca899"/></svg></div>
<div class="crumb" style="left:199px;width:46px"></div>
<span class="ui" style="left:202.1px;top:506.5px;letter-spacing:-0.18px;">&lt;body&gt;</span>
<div class="crumb" style="left:248px;width:132px"></div>
<span class="ui" style="left:251.4px;top:506.5px;letter-spacing:-0.14px;">&lt;asp:content#content1&gt;</span>
<div class="crumb" style="left:383px;width:28px"></div>
<span class="ui" style="left:386.3px;top:506.5px;letter-spacing:-0.65px;">&lt;p&gt;</span>
<div class="crumb" style="left:414px;width:128px"></div>
<span class="ui" style="left:417.3px;top:506.5px;letter-spacing:-0.21px;">&lt;asp:datalist#datalist1&gt;</span>
<div class="crumb" style="left:545px;width:34px;border-color:#316ac5;background:#e1e6e8"></div>
<span class="ui" style="left:548.2px;top:506.5px;letter-spacing:-0.23px;">&lt;h3&gt;</span>
<div class="crumb" style="left:805px;width:11px"><svg width="9" height="17"><path d="M3 5.500v6l3.500-3z" fill="#aca899"/></svg></div>
<!-- btabs -->
<div style="left:4px;top:526px;width:846px;height:22px;background:linear-gradient(90deg,#e8e5d5 0%,#ece9da 50%,#f3f1e8 100%)"></div>
<div style="left:4px;top:548px;width:846px;height:1px;background:#aca899"></div>
<svg style="left:28px;top:526px" width="220" height="22" viewBox="0 0 220 22">
 <path d="M1.500 22v-17q0-3 3-3h60q3 0 3 3v17" fill="#f1efe5" stroke="#b9b6a4"/>
 <path d="M67.500 22v-17q0-3 3-3h52q3 0 3 3v17" fill="#f1efe5" stroke="#b9b6a4"/>
 <path d="M125.500 22v-17q0-3 3-3h87q3 0 3 3v17" fill="#f1efe5" stroke="#b9b6a4"/>
</svg>
<!-- error list icon -->
<svg style="left:32px;top:529px" width="16" height="17" viewBox="0 0 16 17"><rect x=".5" y="2.500" width="11" height="12" rx="1" fill="#eef2fb" stroke="#8b97b5"/><path d="M3 .8h6v3H3z" fill="#e7c873" stroke="#a58a3a" stroke-width=".8"/><circle cx="10.800" cy="12" r="4.500" fill="#ea4a2e" stroke="#c0311a" stroke-width=".6"/><path d="M8.800 10l4 4M12.800 10l-4 4" stroke="#fff" stroke-width="1.500"/></svg>

<span class="ui" style="left:50.1px;top:532px;letter-spacing:-0.29px;color:#7b7a6c">Error List</span>
<svg style="left:100px;top:532px" width="12" height="12" viewBox="0 0 14 14"><rect x=".5" y=".5" width="13" height="13" fill="#f4f7fd" stroke="#5d7fc0"/><rect x="1" y="1" width="12" height="2.500" fill="#6f93d8"/><path d="M3 5.500h8M3 7.500h6M3 9.500h8M3 11.500h5" stroke="#4b6fb8"/></svg>
<span class="ui" style="left:118.1px;top:532px;letter-spacing:-0.28px;color:#7b7a6c">Output</span>
<svg style="left:157px;top:530px" width="15" height="16" viewBox="0 0 16 17"><rect x=".5" y="1.500" width="13" height="9" fill="#f4f7fd" stroke="#5d7fc0"/><rect x="1" y="2" width="12" height="2.500" fill="#6f93d8"/><path d="M2.500 6.500h9M2.500 8.500h7" stroke="#4b6fb8"/><path d="M7 10h2.500v6H6zM11 10h2.500l1 6h-3.500z" fill="#333" stroke="#111" stroke-width=".6"/><path d="M9 11.500h2.500" stroke="#111" stroke-width="1.500"/></svg>
<span class="ui" style="left:175.1px;top:532px;letter-spacing:-0.18px;color:#7b7a6c">Find Results 1</span>
<!-- status -->
<div style="left:4px;top:549px;width:846px;height:22px;background:linear-gradient(180deg,#d4d1bd 0,#e6e3d1 2px,#ece9d8 4px)"></div>

<span class="ui" style="left:11.8px;top:554.5px;letter-spacing:0.15px;">Ready</span>
<svg style="left:836px;top:557px" width="13" height="13"><path d="M11 3h2v2h-2zM7 7h2v2H7zM11 7h2v2h-2zM3 11h2v2H3zM7 11h2v2H7zM11 11h2v2h-2z" fill="#fff"/><path d="M10 2h2v2h-2zM6 6h2v2H6zM10 6h2v2h-2zM2 10h2v2H2zM6 10h2v2H6zM10 10h2v2h-2z" fill="#b0ad99"/></svg>
<!-- side -->
<div style="left:828px;top:106px;width:22px;height:442px;background:#f1efe5"></div>
<div class="stab" style="top:108px;height:108px"></div>
<div class="stab" style="top:215px;height:75px"></div>
<div class="stab" style="top:289px;height:100px"></div>
<div class="stab" style="top:388px;height:78px"></div>
<!-- solution explorer icon -->
<svg style="left:832px;top:111px" width="16" height="16" viewBox="0 0 16 16"><path d="M5.500 4.500h6.500v11h-6.500z" fill="#e3e9f8" stroke="#6a7fae" stroke-width=".8"/><rect x="12" y="4.500" width="3" height="11" fill="#4f7fe0"/><path d="M6.500 .8h5.500v6l-1.500 1h-4z" fill="#f3c02c" stroke="#8d6a1c" stroke-width=".8"/><circle cx="6.300" cy="8.700" r="3.300" fill="#d9effb" stroke="#9db7d6" stroke-width=".9"/><path d="M3.800 11.200l-3 2.600" stroke="#d9a326" stroke-width="2" stroke-linecap="round"/></svg>
<span class="sv" style="top:130px;letter-spacing:-0.1px">Solution Explorer</span>
<svg style="left:833px;top:218px" width="15" height="16" viewBox="0 0 15 16"><rect x=".5" y=".5" width="10" height="11" fill="#e6eefc" stroke="#4a556e"/><rect x="8" y="1" width="3" height="3" fill="#6f9be8"/><path d="M3 3v2M5 3v2M3 6v4M5 6v4" stroke="#8fa6d2" stroke-width="1"/><path d="M7 4l2-1 4 3.500 1 3-.5 4h-4.500l-1-3-2-2 1.500-1z" fill="#f3c531" stroke="#9b7416" stroke-width=".7"/><rect x="7" y="14.500" width="7" height="1.500" fill="#38a33a"/></svg>
<span class="sv" style="top:237px">Properties</span>
<svg style="left:833px;top:292px" width="15" height="16" viewBox="0 0 15 16"><rect x="8.500" y="1.500" width="6" height="8" fill="#3d7de0" stroke="#9fb6e0" stroke-width=".8"/><rect x="3.500" y=".5" width="4" height="6" fill="#e8edf8" stroke="#6a7fae" stroke-width=".8"/><rect x="5.800" y="6.500" width="6" height="8" fill="#3d7de0" stroke="#9fb6e0" stroke-width=".8"/><rect x=".5" y="5.500" width="4.500" height="10" fill="#e8edf8" stroke="#53668f" stroke-width=".9"/><circle cx="5.500" cy="2.300" r=".9" fill="#5cc25a"/><circle cx="5.500" cy="3.800" r=".9" fill="#f0b52a"/><circle cx="2.600" cy="7.300" r=".9" fill="#5cc25a"/><circle cx="2.600" cy="8.800" r=".9" fill="#f0b52a"/><path d="M2.600 10.500v3.500" stroke="#53668f"/></svg>
<span class="sv" style="top:311px;letter-spacing:-0.19px">Server Explorer</span>
<svg style="left:831px;top:391px" width="17" height="17" viewBox="0 0 17 17"><rect x="5" y=".5" width="10.500" height="13" fill="#f0f4fd" stroke="#6f86b8" stroke-width=".9"/><rect x="14" y="1" width="2" height="12.500" fill="#5a88e2"/><path d="M5.500 8.500h8.500M10 8.500v5" stroke="#9aa7c2" stroke-width=".8"/><path d="M7 4.500l3.500-3.200 5 3.800-3.500 3.200z" fill="#f2bd2c" stroke="#c9951a" stroke-width=".6"/><path d="M.6 13l3-2.800 3.400 2.800-3.200 3z" fill="#3f8be0" stroke="#1d57b0" stroke-width=".6"/><path d="M6.800 13l3.400-3 3.400 3-3.400 3z" fill="#e85ad8" stroke="#a426a0" stroke-width=".6"/></svg>
<span class="sv" style="top:410px">Class View</span>
<!-- frame -->
<div id="bl"></div><div id="br"></div><div id="bb"></div>
</div>
</body>
</html>
